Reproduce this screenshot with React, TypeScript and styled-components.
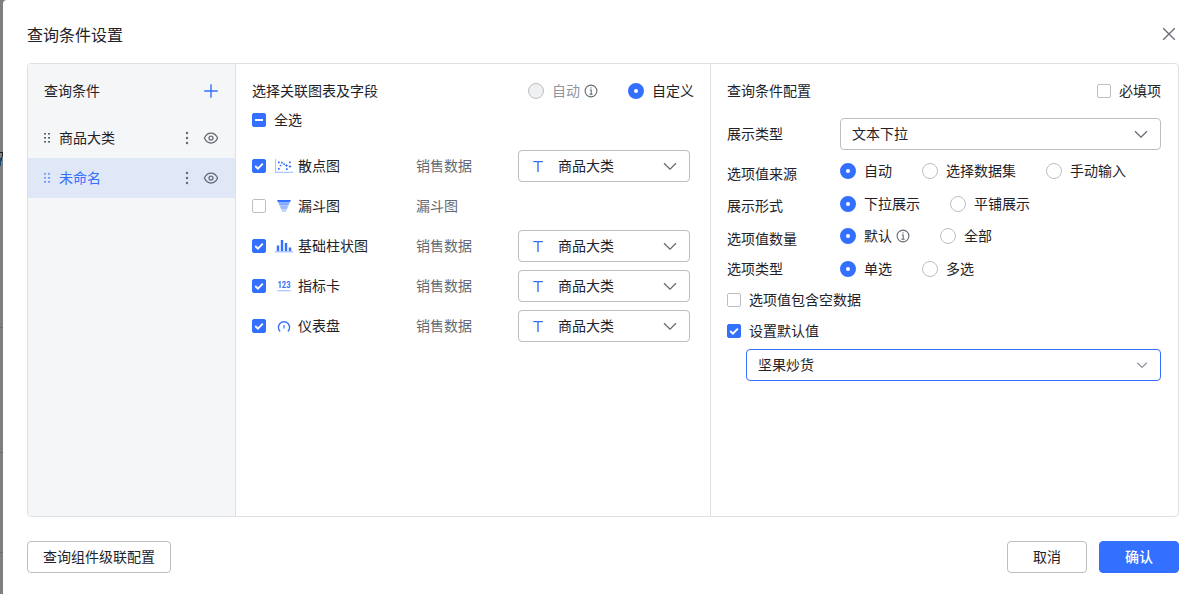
import React from "react";
import styled, { createGlobalStyle, css } from "styled-components";

const BLUE = "#3370ff";
const INK = "#1f2329";
const GREY = "#646a73";
const LINE = "#bbbfc4";

const GlobalStyle = createGlobalStyle`
  * { box-sizing: border-box; }
  body {
    margin: 0;
    background: #7f7f7f;
    color: ${INK};
    font-family: "Liberation Sans", "Noto Sans CJK SC", sans-serif;
    font-size: 14px;
    line-height: 22px;
    overflow: hidden;
  }
  svg { display: block; flex: none; }
`;

const Backdrop = styled.div`
  height: 594px;
  padding-left: 3px;
  background:
    linear-gradient(#1c1c1c, #1c1c1c) 0 152px / 3px 1px no-repeat,
    linear-gradient(#2c2c2c, #2c2c2c) 2px 153px / 1px 4px no-repeat,
    linear-gradient(#2c3a48, #2c3a48) 1px 157px / 1px 4px no-repeat,
    linear-gradient(#174a73, #174a73) 0 158px / 1px 8px no-repeat,
    linear-gradient(#6c6c6c, #6c6c6c) 0 327px / 3px 1px no-repeat,
    linear-gradient(#6c6c6c, #6c6c6c) 0 452px / 3px 1px no-repeat,
    linear-gradient(#6c6c6c, #6c6c6c) 0 552px / 3px 1px no-repeat,
    #7f7f7f;
`;

const Dialog = styled.main`
  height: 594px;
  padding: 0 20px 0 24px;
  background: #fff;
  border-top-left-radius: 4px;
  display: flex;
  flex-direction: column;
`;

const DialogHeader = styled.header`
  height: 63px;
  padding: 7px 2px 0 0;
  display: flex;
  align-items: center;
  justify-content: space-between;
  h1 { margin: 2px 0 0; font-size: 16px; font-weight: 400; line-height: 24px; }
  svg { margin-bottom: 2px; }
`;

const Panels = styled.div`
  height: 454px;
  display: grid;
  grid-template-columns: 208px 475px 1fr;
  border: 1px solid #dee0e3;
  border-radius: 4px;
  overflow: hidden;
`;

const Conditions = styled.aside`
  background: #f5f6f7;
  border-right: 1px solid #dee0e3;
`;

const ConditionsHeader = styled.div`
  height: 54px;
  padding: 0 16px;
  display: flex;
  align-items: center;
  justify-content: space-between;
`;

const ConditionRow = styled.div<{ $active?: boolean }>`
  height: 40px;
  padding: 0 16px;
  display: flex;
  align-items: center;
  background: ${(p) => (p.$active ? "#e0e7f7" : "transparent")};
  color: ${(p) => (p.$active ? BLUE : INK)};
  span { flex: 1; padding-left: 9px; }
`;

const RowActions = styled.div`
  display: flex;
  align-items: center;
  gap: 14px;
  color: ${GREY};
`;

const Charts = styled.section`
  border-right: 1px solid #dee0e3;
  padding: 0 16px;
`;

const SectionHeader = styled.div`
  height: 54px;
  display: flex;
  align-items: center;
  justify-content: space-between;
`;

const RadioGroup = styled.div`
  display: flex;
  align-items: center;
  gap: 30px;
`;

const RadioLabel = styled.label<{ $disabled?: boolean }>`
  display: flex;
  align-items: center;
  gap: 8px;
  color: ${(p) => (p.$disabled ? "#8f959e" : INK)};
  svg { margin-left: -4px; }
`;

const RadioDot = styled.i<{ $on?: boolean; $disabled?: boolean }>`
  flex: none;
  width: 16px;
  height: 16px;
  border-radius: 50%;
  border: 1px solid ${LINE};
  background: ${(p) => (p.$disabled ? "#eff0f1" : "#fff")};
  ${(p) => p.$on && css`border: 6px solid ${BLUE};`}
`;

const Box = styled.i<{ $on?: boolean }>`
  flex: none;
  width: 14px;
  height: 14px;
  border-radius: 2px;
  border: 1px solid ${(p) => (p.$on ? BLUE : LINE)};
  background: ${(p) => (p.$on ? BLUE : "#fff")};
  display: grid;
  place-items: center;
`;

const CheckLabel = styled.label<{ $height?: number }>`
  height: ${(p) => p.$height ?? 22}px;
  display: flex;
  align-items: center;
  gap: 8px;
`;

const ChartList = styled.div`
  padding-top: 24px;
`;

const ChartRow = styled.div`
  height: 40px;
  display: grid;
  grid-template-columns: 23px 23px 118px 102px 172px;
  align-items: center;
`;

const Source = styled.span`
  color: ${GREY};
`;

const Select = styled.div<{ $focus?: boolean }>`
  height: 32px;
  padding: 0 12px 0 11px;
  display: flex;
  align-items: center;
  border: 1px solid ${(p) => (p.$focus ? BLUE : LINE)};
  border-radius: 4px;
  color: ${GREY};
  span { flex: 1; color: ${INK}; }
`;

const TypeIcon = styled.svg`
  margin-right: 12px;
`;

const Config = styled.section`
  padding: 0 17px 0 16px;
`;

const FormRow = styled.div<{ $height: number }>`
  height: ${(p) => p.$height}px;
  display: grid;
  grid-template-columns: 113px 1fr;
  align-items: center;
`;

const FieldLabel = styled.span<{ $drop?: number }>`
  padding-top: ${(p) => (p.$drop ?? 0) * 2}px;
`;

const Options = styled.div`
  padding-top: 4px;
`;

const DefaultValue = styled.div`
  padding: 1px 0 0 19px;
`;

const Footer = styled.footer`
  padding-top: 24px;
  display: flex;
  gap: 12px;
`;

const Button = styled.button<{ $primary?: boolean; $width: number; $left?: boolean }>`
  width: ${(p) => p.$width}px;
  height: 32px;
  padding: 0;
  font: inherit;
  border-radius: 4px;
  border: 1px solid ${(p) => (p.$primary ? BLUE : LINE)};
  background: ${(p) => (p.$primary ? BLUE : "#fff")};
  color: ${(p) => (p.$primary ? "#fff" : INK)};
  font-weight: ${(p) => (p.$primary ? 500 : 400)};
  margin-right: ${(p) => (p.$left ? "auto" : 0)};
`;

const CloseIcon = () => (
  <svg width="16" height="16" viewBox="0 0 16 16" fill="none" stroke={GREY} strokeWidth="1.3">
    <path d="M2.2 2.2 13.8 13.8M13.8 2.2 2.2 13.8" />
  </svg>
);

const PlusIcon = () => (
  <svg width="16" height="16" viewBox="0 0 16 16" fill="none" stroke={BLUE} strokeWidth="1.4">
    <path d="M8 1.2v13.6M1.2 8h13.6" />
  </svg>
);

const DragIcon = () => (
  <svg width="6" height="12" viewBox="0 0 6 12" fill="currentColor">
    {[1, 5, 9].map((y) => (
      <React.Fragment key={y}>
        <rect x="0.3" y={y} width="1.4" height="1.6" />
        <rect x="4.3" y={y} width="1.4" height="1.6" />
      </React.Fragment>
    ))}
  </svg>
);

const MoreIcon = () => (
  <svg width="4" height="14" viewBox="0 0 4 14" fill="currentColor">
    <circle cx="2" cy="2" r="1.2" />
    <circle cx="2" cy="7" r="1.2" />
    <circle cx="2" cy="12" r="1.2" />
  </svg>
);

const EyeIcon = () => (
  <svg width="16" height="16" viewBox="0 0 16 16" fill="none" stroke="currentColor" strokeWidth="1.25">
    <path d="M1.4 8C2.8 4.9 5.2 3 8 3s5.2 1.9 6.6 5C13.2 11.1 10.8 13 8 13S2.8 11.1 1.4 8Z" />
    <circle cx="8" cy="8" r="2" />
  </svg>
);

const InfoIcon = () => (
  <svg width="14" height="14" viewBox="0 0 14 14" fill="none" stroke={GREY} strokeWidth="1.1">
    <circle cx="7" cy="7" r="5.9" />
    <path d="M5.8 6H7.2V10M5.3 10.2H8.7" />
    <circle cx="7" cy="3.9" r=".7" fill={GREY} stroke="none" />
  </svg>
);

const ChevronIcon = () => (
  <svg width="14" height="14" viewBox="0 0 14 14" fill="none" stroke="currentColor" strokeWidth="1.25">
    <path d="M1 4.2 7 10.2 13 4.2" />
  </svg>
);

const SmallChevronIcon = () => (
  <svg width="12" height="12" viewBox="0 0 12 12" fill="none" stroke="#8f959e" strokeWidth="1.3">
    <path d="M1.2 3.8 6 8.4 10.8 3.8" />
  </svg>
);

const TickIcon = () => (
  <svg width="12" height="12" viewBox="0 0 12 12" fill="none" stroke="#fff" strokeWidth="1.9">
    <path d="M2.2 6 4.9 8.6 9.8 3.6" />
  </svg>
);

const DashIcon = () => (
  <svg width="8" height="2" viewBox="0 0 8 2">
    <rect width="8" height="2" fill="#fff" />
  </svg>
);

const ScatterIcon = () => (
  <svg width="18" height="14" viewBox="0 0 18 14">
    <path d="M.5 0V13.3H18" fill="none" stroke="#adc6ff" strokeWidth="1.2" />
    <g fill={BLUE}>
      <rect x="3" y="2.5" width="1.7" height="1.7" />
      <rect x="6" y="2.8" width="1.7" height="1.7" />
      <rect x="4.8" y="5.8" width="1.5" height="1.5" />
      <rect x="3" y="9" width="1.7" height="1.7" />
      <rect x="8.3" y="4.3" width="1.6" height="1.6" />
      <rect x="14" y="2.5" width="1.7" height="1.7" />
      <rect x="11" y="9.3" width="1.7" height="1.7" />
    </g>
    <path d="M11.5 5.2v2.6M10.2 6.5h2.6M15 6.2v2.6M13.7 7.5h2.6" stroke={BLUE} strokeWidth=".9" />
  </svg>
);

const FunnelIcon = () => (
  <svg width="18" height="14" viewBox="0 0 18 14">
    <path d="M2 1H16L14.8 3.3H3.2Z" fill={BLUE} />
    <path d="M3.2 3.3H14.8L13.4 6.6H4.6Z" fill="#85a9ff" />
    <path d="M4.6 6.6H13.4L12 9.9H6Z" fill="#9dbaff" />
    <path d="M6 9.9H12L11 13H7Z" fill="#c2d4ff" />
  </svg>
);

const BarsIcon = () => (
  <svg width="18" height="14" viewBox="0 0 18 14">
    <path d="M1.8 6.5h2.4V12H1.8zM5.8 1h2.4v11H5.8zM9.8 4h2.4v8H9.8zM13.8 8.5h2.4V12h-2.4z" fill={BLUE} />
    <path d="M0 12h18v1.5H0z" fill="#adc6ff" />
  </svg>
);

const MetricIcon = () => (
  <svg width="18" height="16" viewBox="0 -1 18 16">
    <text
      x="9"
      y="9.2"
      textAnchor="middle"
      textLength="13"
      lengthAdjust="spacingAndGlyphs"
      fill={BLUE}
      fontFamily="Roboto, sans-serif"
      fontWeight="700"
      fontSize="9.5"
    >
      123
    </text>
    <path d="M2.500 11h13v1.300h-13z" fill="#adc6ff" />
  </svg>
);

const GaugeIcon = () => (
  <svg width="18" height="14" viewBox="0 0 18 14" fill="none" stroke={BLUE} strokeWidth="1.4">
    <path d="M5.200 12.500A5.600 5.600 0 1 1 12.800 12.500" />
    <path d="M9 6v3.500" stroke="#5c8dff" />
  </svg>
);

const TextTypeIcon = () => (
  <TypeIcon width="16" height="16" viewBox="0 0 16 16" fill="none" stroke={BLUE} strokeWidth="1.4">
    <path d="M3.2 3.6H12.8M8 3.6V14" />
  </TypeIcon>
);

type RadioProps = { label: string; on?: boolean; disabled?: boolean; info?: boolean };

const Radio = ({ label, on, disabled, info }: RadioProps) => (
  <RadioLabel $disabled={disabled}>
    <RadioDot $on={on} $disabled={disabled} />
    {label}
    {info && <InfoIcon />}
  </RadioLabel>
);

const Check = ({ on }: { on?: boolean }) => <Box $on={on}>{on && <TickIcon />}</Box>;

const conditions = [{ name: "商品大类" }, { name: "未命名", active: true }];

const charts = [
  { name: "散点图", icon: <ScatterIcon />, source: "销售数据", on: true },
  { name: "漏斗图", icon: <FunnelIcon />, source: "漏斗图", on: false },
  { name: "基础柱状图", icon: <BarsIcon />, source: "销售数据", on: true },
  { name: "指标卡", icon: <MetricIcon />, source: "销售数据", on: true },
  { name: "仪表盘", icon: <GaugeIcon />, source: "销售数据", on: true },
];

const options: { label: string; height: number; drop?: number; radios: RadioProps[] }[] = [
  {
    label: "选项值来源",
    height: 34,
    drop: 3,
    radios: [{ label: "自动", on: true }, { label: "选择数据集" }, { label: "手动输入" }],
  },
  { label: "展示形式", height: 32, drop: 2, radios: [{ label: "下拉展示", on: true }, { label: "平铺展示" }] },
  { label: "选项值数量", height: 32, drop: 3, radios: [{ label: "默认", on: true, info: true }, { label: "全部" }] },
  { label: "选项类型", height: 34, radios: [{ label: "单选", on: true }, { label: "多选" }] },
];

export default function App() {
  return (
    <Backdrop>
      <GlobalStyle />
      <Dialog>
        <DialogHeader>
          <h1>查询条件设置</h1>
          <CloseIcon />
        </DialogHeader>
        <Panels>
          <Conditions>
            <ConditionsHeader>
              查询条件
              <PlusIcon />
            </ConditionsHeader>
            {conditions.map((c) => (
              <ConditionRow key={c.name} $active={c.active}>
                <DragIcon />
                <span>{c.name}</span>
                <RowActions>
                  <MoreIcon />
                  <EyeIcon />
                </RowActions>
              </ConditionRow>
            ))}
          </Conditions>

          <Charts>
            <SectionHeader>
              选择关联图表及字段
              <RadioGroup>
                <Radio label="自动" disabled info />
                <Radio label="自定义" on />
              </RadioGroup>
            </SectionHeader>
            <CheckLabel $height={4}>
              <Box $on>
                <DashIcon />
              </Box>
              全选
            </CheckLabel>
            <ChartList>
              {charts.map((c) => (
                <ChartRow key={c.name}>
                  <Check on={c.on} />
                  {c.icon}
                  <span>{c.name}</span>
                  <Source>{c.source}</Source>
                  {c.on && (
                    <Select>
                      <TextTypeIcon />
                      <span>商品大类</span>
                      <ChevronIcon />
                    </Select>
                  )}
                </ChartRow>
              ))}
            </ChartList>
          </Charts>

          <Config>
            <SectionHeader>
              查询条件配置
              <CheckLabel>
                <Check />
                必填项
              </CheckLabel>
            </SectionHeader>
            <FormRow $height={32}>
              <FieldLabel>展示类型</FieldLabel>
              <Select>
                <span>文本下拉</span>
                <ChevronIcon />
              </Select>
            </FormRow>
            <Options>
              {options.map((o) => (
                <FormRow key={o.label} $height={o.height}>
                  <FieldLabel $drop={o.drop}>{o.label}</FieldLabel>
                  <RadioGroup>
                    {o.radios.map((r) => (
                      <Radio key={r.label} {...r} />
                    ))}
                  </RadioGroup>
                </FormRow>
              ))}
            </Options>
            <CheckLabel $height={28}>
              <Check />
              选项值包含空数据
            </CheckLabel>
            <CheckLabel $height={34}>
              <Check on />
              设置默认值
            </CheckLabel>
            <DefaultValue>
              <Select $focus>
                <span>坚果炒货</span>
                <SmallChevronIcon />
              </Select>
            </DefaultValue>
          </Config>
        </Panels>
        <Footer>
          <Button $width={144} $left>
            查询组件级联配置
          </Button>
          <Button $width={80}>取消</Button>
          <Button $width={80} $primary>
            确认
          </Button>
        </Footer>
      </Dialog>
    </Backdrop>
  );
}
